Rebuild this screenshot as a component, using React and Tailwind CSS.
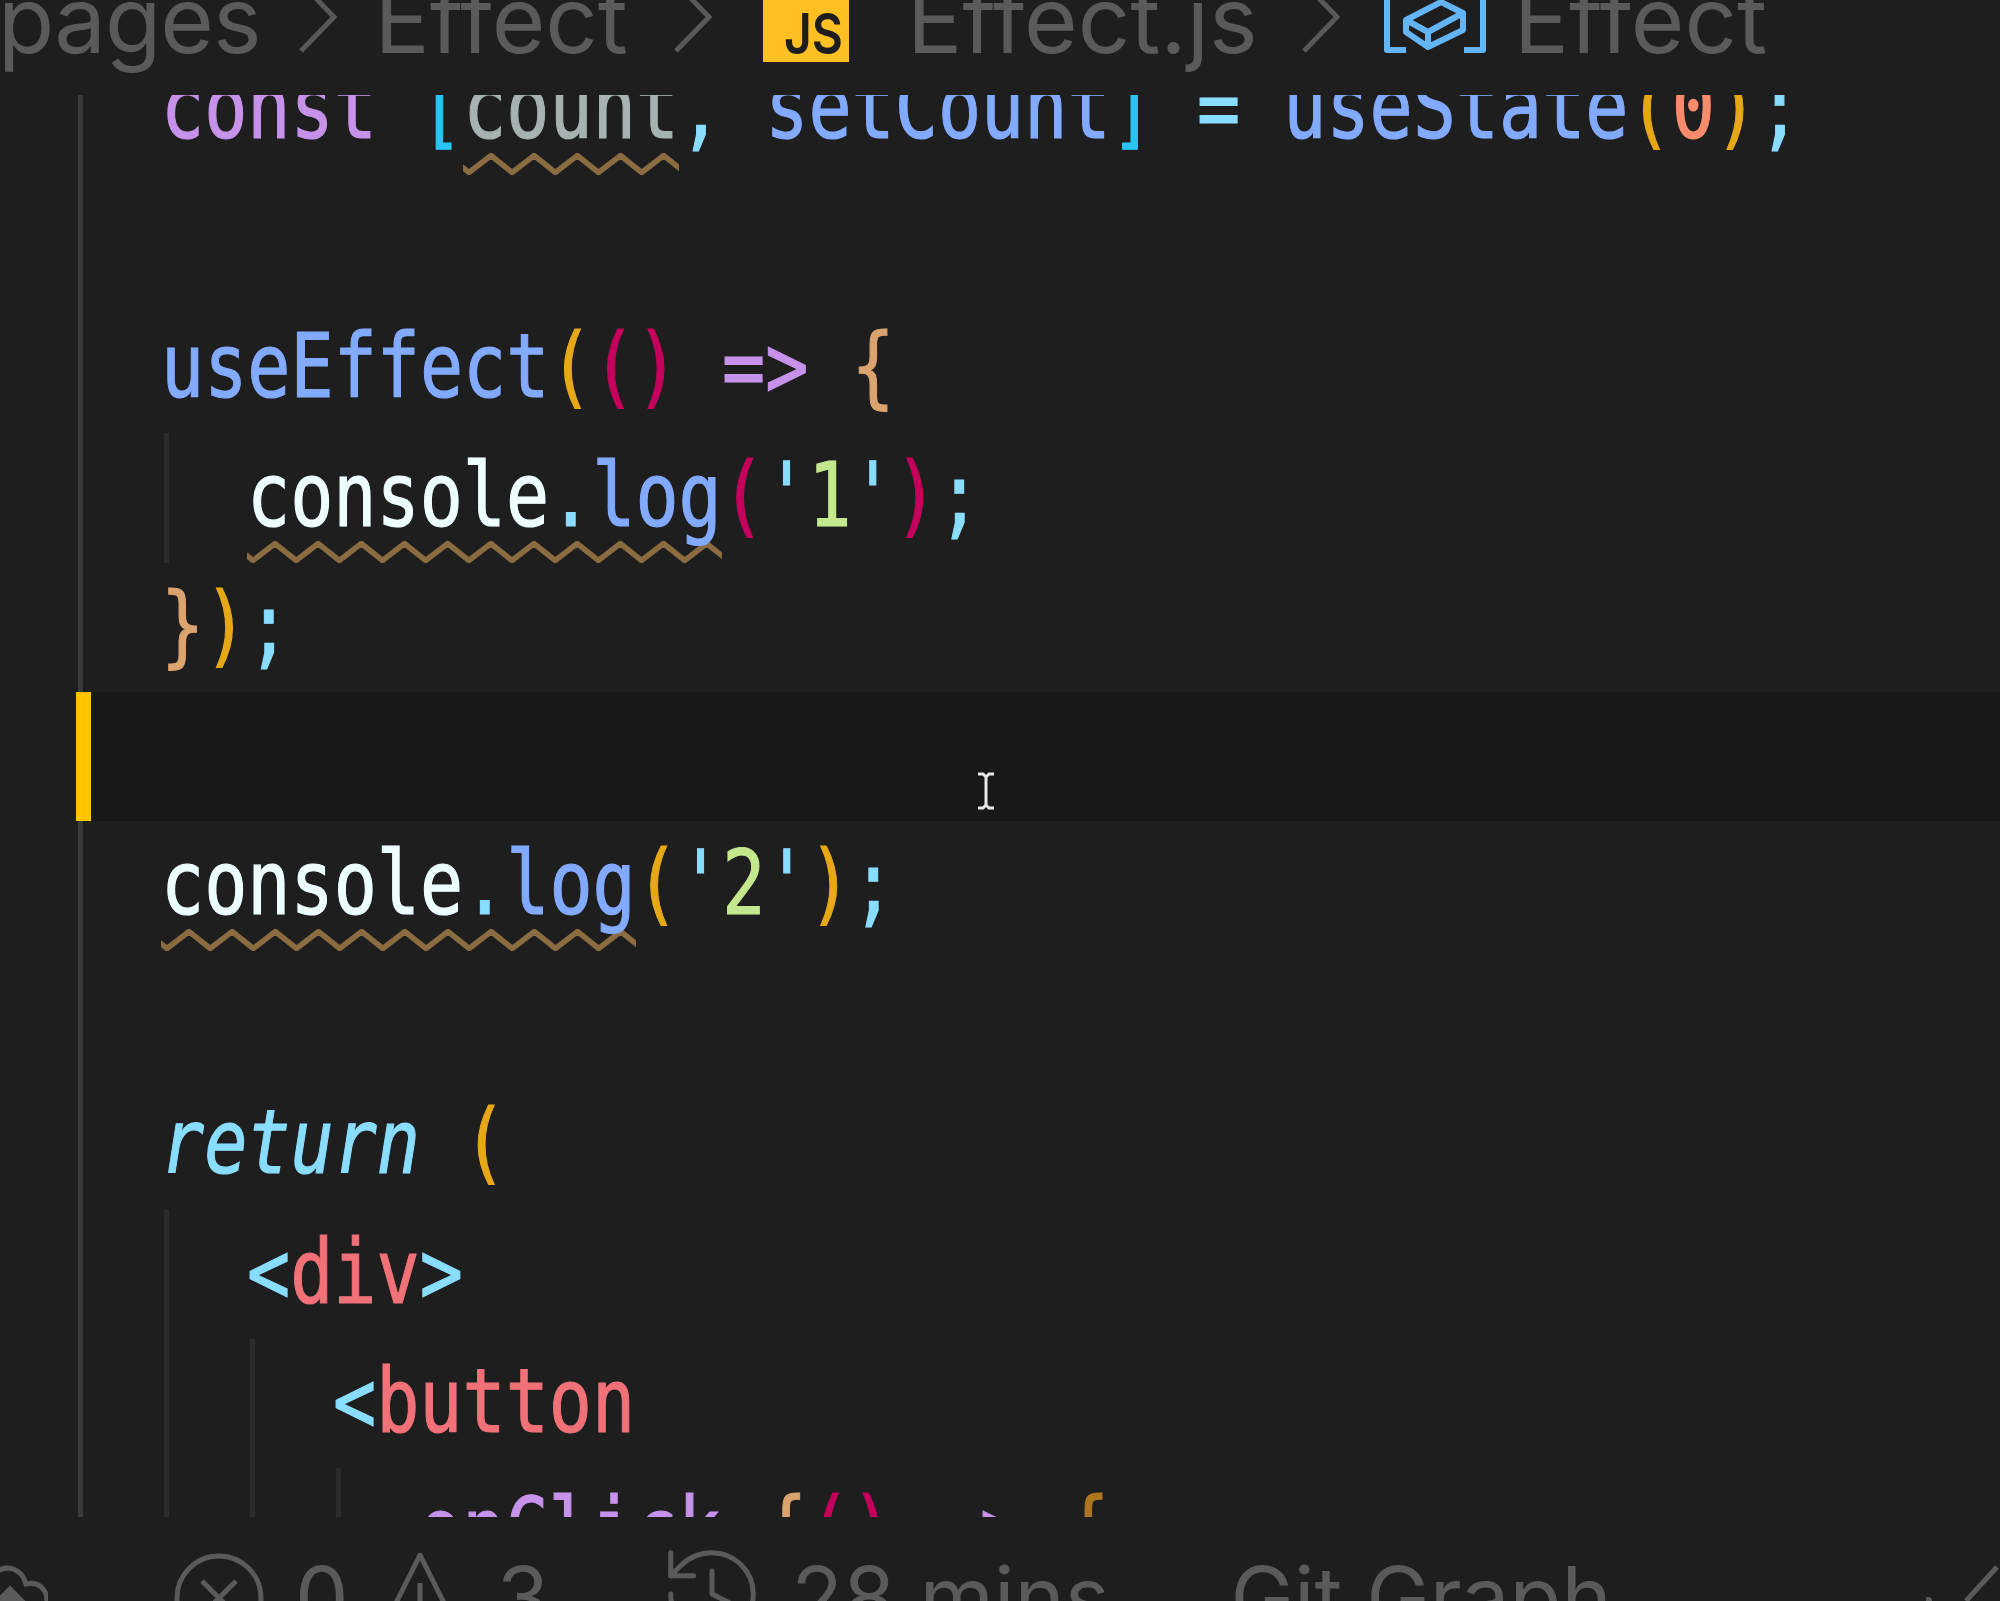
import React from "react";
import { History } from "lucide-react";

const purple = "text-[#c792ea]";
const blue = "text-[#82aaff]";
const cyan = "text-[#89ddff]";
const gold = "text-[#e6a817]";
const pink = "text-[#c5005c]";
const tan = "text-[#dba36e]";
const white = "text-[#eeffff]";
const green = "text-[#c3e88d]";
const red = "text-[#f07178]";

// Squiggle under a token, one wave per character
const Squiggle = ({ chars }) => {
  const period = 43.17;
  const w = chars * period;
  let points = "";
  for (let i = -1; i <= chars; i++) {
    const x = i * period;
    points += `${x + 6},19.5 ${x + 28},2.5 `;
  }
  return (
    <svg
      className="absolute left-0 top-[108px]"
      width={w}
      height={22}
      viewBox={`0 0 ${w} 22`}
    >
      <polyline points={points} fill="none" stroke="#8a6c40" strokeWidth="5.5" />
    </svg>
  );
};

const T = ({ c, children, warn }) => (
  <span className={`relative inline-block h-full ${c}`}>
    <span className="inline-block origin-[0_70px] scale-y-[1.23] [-webkit-text-stroke:1px]">{children}</span>
    {warn && <Squiggle chars={warn} />}
  </span>
);

const Guide = ({ faint }) => (
  <span
    className={`h-full w-[86px] shrink-0 border-l-[5px] ${faint ? "border-[#2c2c2c]" : "border-[#3a3a3a]"}`}
  />
);

const Row = ({ guides = 1, children }) => (
  <div className="flex h-[129.4px] shrink-0 whitespace-pre pl-[78px]">
    <Guide />
    {guides > 1 && <Guide faint />}
    {guides > 2 && <Guide faint />}
    {guides > 3 && <Guide faint />}
    <div className="-ml-[3px] flex">{children}</div>
  </div>
);

const Chevron = ({ className }) => (
  <svg width="38" height="70" viewBox="0 0 38 70" className={`mt-[-17px] shrink-0 ${className}`} fill="none">
    <path d="M2 0 L35 34 L2 68" stroke="#585858" strokeWidth="5" />
  </svg>
);

export default function App() {
  return (
    <div className="flex h-[1601px] w-[2000px] flex-col overflow-hidden bg-[#1e1e1f] font-['DejaVu_Sans_Mono',monospace] text-[71.7px] leading-[129.4px]">
      {/* breadcrumb */}
      <header className="flex h-[95px] shrink-0 items-start overflow-hidden whitespace-pre font-['Inter',sans-serif] text-[92px] leading-[70px] text-[#5a5a5a]">
        <span className="-ml-[2px] -mt-[15px] tracking-[-1px]">pages</span>
        <Chevron className="ml-[38px]" />
        <span className="-mt-[15px] ml-[38px]">Effect</span>
        <Chevron className="ml-[46px]" />
        <div className="ml-[51px] -mt-[18px] flex h-[80px] w-[86px] shrink-0 items-end justify-end bg-[#fec023] pr-[6px] text-[48px] font-semibold leading-none text-[#1e1e1e]">
          <span className="inline-block origin-bottom scale-y-[1.17]">JS</span>
        </div>
        <span className="-mt-[15px] ml-[58px]">Effect.js</span>
        <Chevron className="ml-[44px]" />
        <svg width="102" height="56" viewBox="0 0 102 56" className="ml-[44px] shrink-0" fill="none" stroke="#64b5f6" strokeWidth="6" strokeLinejoin="round">
          <path d="M22 50 H3 V-5" />
          <path d="M80 50 H99 V-5" />
          <path d="M22 20 L57 2 L79 13 V30 L44 47 L22 32 Z" />
          <path d="M22 20 L44 32 L79 13 M44 32 V47" />
        </svg>
        <span className="-mt-[15px] ml-[28px]">Effect</span>
      </header>

      {/* code */}
      <main className="h-[1422px] shrink-0 overflow-hidden">
        <div className="-mt-[50px] flex flex-col">
          <Row>
            <T c={purple}>const</T>
            <T c={cyan}> </T>
            <T c="text-[#29c5f5]">[</T>
            <T c="text-[#a6b3b0]" warn={5}>count</T>
            <T c={cyan}>, </T>
            <T c={blue}>setCount</T>
            <T c="text-[#29c5f5]">]</T>
            <T c={cyan}> = </T>
            <T c={blue}>useState</T>
            <T c={gold}>(</T>
            <T c="text-[#f78c6c]">0</T>
            <T c={gold}>)</T>
            <T c={cyan}>;</T>
          </Row>
          <Row />
          <Row>
            <T c={blue}>useEffect</T>
            <T c={gold}>(</T>
            <T c={pink}>()</T>
            <T c={purple}> =&gt; </T>
            <T c={tan}>{"{"}</T>
          </Row>
          <Row guides={2}>
            <T c={white} warn={11}>console</T>
            <T c={cyan}>.</T>
            <T c={blue}>log</T>
            <T c={pink}>(</T>
            <T c={cyan}>'</T>
            <T c={green}>1</T>
            <T c={cyan}>'</T>
            <T c={pink}>)</T>
            <T c={cyan}>;</T>
          </Row>
          <Row>
            <T c={tan}>{"}"}</T>
            <T c={gold}>)</T>
            <T c={cyan}>;</T>
          </Row>
          <div className="ml-[76px] flex h-[129.4px] shrink-0 bg-[#181818]">
            <span className="h-full w-[15px] bg-[#ffc600]" />
            <svg width="22" height="38" viewBox="0 0 22 38" className="ml-[884px] mt-[80px]" fill="none">
              <path d="M3 2 H8 L11 5 L14 2 H19 M11 5 V33 M3 36 H8 L11 33 L14 36 H19" stroke="#e8e8e8" strokeWidth="3" />
            </svg>
          </div>
          <Row>
            <T c={white} warn={11}>console</T>
            <T c={cyan}>.</T>
            <T c={blue}>log</T>
            <T c={gold}>(</T>
            <T c={cyan}>'</T>
            <T c={green}>2</T>
            <T c={cyan}>'</T>
            <T c={gold}>)</T>
            <T c={cyan}>;</T>
          </Row>
          <Row />
          <Row>
            <span className="italic"><T c={cyan}>return</T></span>
            <T c={gold}> (</T>
          </Row>
          <Row guides={2}>
            <T c={cyan}>&lt;</T>
            <T c={red}>div</T>
            <T c={cyan}>&gt;</T>
          </Row>
          <Row guides={3}>
            <T c={cyan}>&lt;</T>
            <T c={red}>button</T>
          </Row>
          <Row guides={4}>
            <T c={purple}>onClick</T>
            <T c={cyan}>=</T>
            <T c={tan}>{"{"}</T>
            <T c={pink}>()</T>
            <T c={purple}> =&gt; </T>
            <T c="text-[#b0751f]">{"{"}</T>
          </Row>
        </div>
      </main>

      {/* status bar, cut by the bottom of the window */}
      <footer className="flex flex-1 items-start overflow-hidden whitespace-pre pt-[36px] font-['Inter',sans-serif] text-[85px] leading-[62px] text-[#5a5a5a]">
        <svg width="48" height="48" viewBox="0 0 48 48" className="shrink-0" fill="none" stroke="#5a5a5a" strokeWidth="5">
          <path d="M-4 19 C8 11 22 16 26 31 C38 28 47 36 47 48" />
          <path d="M-2 48 L10 36 L22 48 Z" fill="#5a5a5a" />
        </svg>
        <svg width="90" height="90" viewBox="0 0 90 90" className="ml-[126px] shrink-0" fill="none" stroke="#5a5a5a" strokeWidth="5">
          <circle cx="45" cy="45" r="42" />
          <path d="M28 28 L62 62 M62 28 L28 62" />
        </svg>
        <span className="ml-[31px] mt-[14px]">0</span>
        <svg width="60" height="60" viewBox="0 0 60 60" className="ml-[41px] shrink-0" fill="none" stroke="#5a5a5a" strokeWidth="5">
          <path d="M30 2 L1 60 H59 Z M30 30 V60" />
        </svg>
        <span className="ml-[47px] mt-[14px]">3</span>
        <History size={110} strokeWidth={1.1} color="#5a5a5a" className="ml-[108px] -mt-[14px] shrink-0" />
        <span className="ml-[24px] mt-[14px]">28 mins</span>
        <span className="ml-[121px] mt-[14px]">Git Graph</span>
        <svg width="74" height="48" viewBox="0 0 74 48" className="ml-auto shrink-0" fill="none" stroke="#5a5a5a" strokeWidth="5">
          <path d="M71 14 L40 48" />
          <circle cx="2" cy="48" r="4" fill="#5a5a5a" stroke="none" />
        </svg>
      </footer>
    </div>
  );
}
